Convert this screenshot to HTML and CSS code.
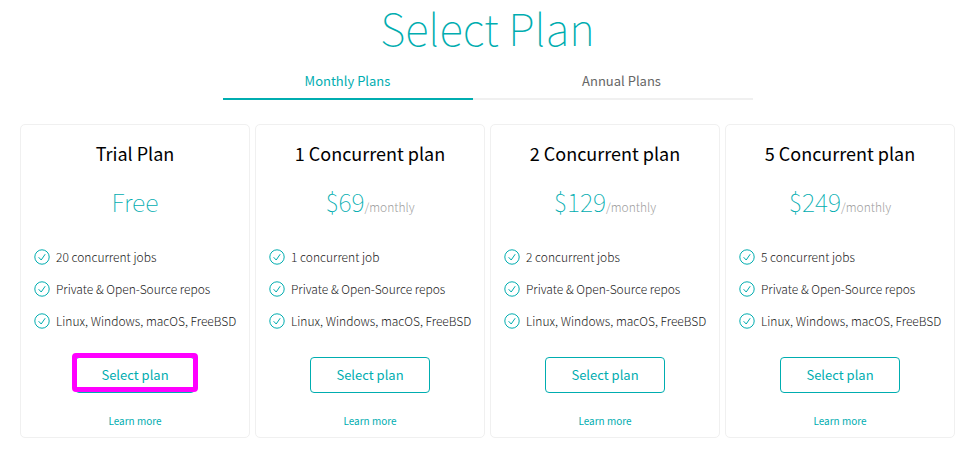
FILE: index.html
```html
<!doctype html>
<html lang="en">
    <head>
        <meta charset="UTF-8" />
        <meta name="viewport" content="width=device-width, initial-scale=1.0" />
        <title>Select Plan</title>
        <link rel="stylesheet" href="styles.css">
    </head>
    <body>
        <!-- Check icon shared by all feature lists -->
        <svg class="sprite" aria-hidden="true">
            <symbol id="check" viewBox="0 0 16 16">
                <circle cx="8" cy="8" r="7.2" />
                <path d="M4.6 8.2l2.6 2.8 4-5.8" />
            </symbol>
        </svg>

        <main class="plans-page">
            <h1>Select Plan</h1>

            <!-- Billing period -->
            <div class="tabs" role="tablist">
                <button class="tab active" role="tab" aria-selected="true">Monthly Plans</button>
                <button class="tab" role="tab" aria-selected="false">Annual Plans</button>
            </div>

            <!-- Plans -->
            <div class="plans">
                <section class="plan">
                    <h2>Trial Plan</h2>
                    <p class="price">Free</p>
                    <ul class="features">
                        <li><svg class="icon"><use href="#check" /></svg>20 concurrent jobs</li>
                        <li><svg class="icon"><use href="#check" /></svg>Private &amp; Open-Source repos</li>
                        <li><svg class="icon"><use href="#check" /></svg>Linux, Windows, macOS, FreeBSD</li>
                    </ul>
                    <button class="select highlight">Select plan</button>
                    <a class="learn-more" href="#">Learn more</a>
                </section>

                <section class="plan">
                    <h2>1 Concurrent plan</h2>
                    <p class="price">$69<span class="period">/monthly</span></p>
                    <ul class="features">
                        <li><svg class="icon"><use href="#check" /></svg>1 concurrent job</li>
                        <li><svg class="icon"><use href="#check" /></svg>Private &amp; Open-Source repos</li>
                        <li><svg class="icon"><use href="#check" /></svg>Linux, Windows, macOS, FreeBSD</li>
                    </ul>
                    <button class="select">Select plan</button>
                    <a class="learn-more" href="#">Learn more</a>
                </section>

                <section class="plan">
                    <h2>2 Concurrent plan</h2>
                    <p class="price">$129<span class="period">/monthly</span></p>
                    <ul class="features">
                        <li><svg class="icon"><use href="#check" /></svg>2 concurrent jobs</li>
                        <li><svg class="icon"><use href="#check" /></svg>Private &amp; Open-Source repos</li>
                        <li><svg class="icon"><use href="#check" /></svg>Linux, Windows, macOS, FreeBSD</li>
                    </ul>
                    <button class="select">Select plan</button>
                    <a class="learn-more" href="#">Learn more</a>
                </section>

                <section class="plan">
                    <h2>5 Concurrent plan</h2>
                    <p class="price">$249<span class="period">/monthly</span></p>
                    <ul class="features">
                        <li><svg class="icon"><use href="#check" /></svg>5 concurrent jobs</li>
                        <li><svg class="icon"><use href="#check" /></svg>Private &amp; Open-Source repos</li>
                        <li><svg class="icon"><use href="#check" /></svg>Linux, Windows, macOS, FreeBSD</li>
                    </ul>
                    <button class="select">Select plan</button>
                    <a class="learn-more" href="#">Learn more</a>
                </section>
            </div>
        </main>
    </body>
</html>
```

FILE: styles.css
```css
* {
    box-sizing: border-box;
}
body {
    margin: 0;
    background: #fff;
    color: #222;
    font-family: "Noto Sans CJK SC", "Noto Sans", sans-serif;
    font-size: 12px;
}
button {
    font-family: inherit;
    background: none;
    cursor: pointer;
}
.sprite {
    display: none;
}
.plans-page {
    padding: 0 22px 18px 20px;
}
h1 {
    margin: 0;
    color: #00adb0;
    font-size: 44px;
    font-weight: 100;
    line-height: 54px;
    text-align: center;
}

/* Tabs */
.tabs {
    display: flex;
    max-width: 530px;
    margin: 8px auto 24px;
    border-bottom: 2px solid #f0f0f0;
}
.tab {
    flex: 1;
    height: 38px;
    margin-bottom: -2px;
    padding: 0 0 2px;
    border: 0;
    color: #666;
    font-size: 13px;
}
.tab.active {
    flex: 0 0 250px;
    margin-right: 18px;
    padding: 0;
    border-bottom: 2px solid #00adb0;
    color: #00adb0;
}

/* Plan cards */
.plans {
    display: grid;
    grid-template-columns: repeat(4, minmax(0, 1fr));
    gap: 5px;
}
.plan {
    display: flex;
    flex-direction: column;
    align-items: center;
    padding: 14px 12px 6px;
    border: 1px solid #f0f0f0;
    border-radius: 5px;
}
h2 {
    margin: 0;
    color: #000;
    font-size: 18px;
    font-weight: 400;
    line-height: 28px;
}
.price {
    margin: 14px 0 19px;
    color: #00adb0;
    font-size: 25px;
    font-weight: 100;
    line-height: 40px;
}
.period {
    color: #a0a0a0;
    font-size: 12px;
    font-weight: 300;
    line-height: 20px;
}
.features {
    align-self: stretch;
    margin: 0;
    padding: 0;
    list-style: none;
}
.features li {
    display: flex;
    align-items: center;
    gap: 6px;
    height: 32px;
    padding-left: 1px;
    font-weight: 300;
    white-space: nowrap;
}
.icon {
    flex: none;
    width: 16px;
    height: 16px;
    margin-top: 2px;
    fill: none;
    stroke: #00adb0;
    stroke-width: 1;
}
.select {
    position: relative;
    width: 120px;
    height: 36px;
    margin: 21px 0 18px;
    padding: 0 0 2px;
    border: 1px solid #00adb0;
    border-radius: 4px;
    color: #00adb0;
    font-size: 13px;
}
.highlight::after {
    content: "";
    position: absolute;
    inset: -5px -4px 0 -4px;
    border: 5px solid #f0f;
    border-radius: 4px;
}
.learn-more {
    color: #00adb0;
    font-size: 10px;
    line-height: 20px;
    text-decoration: none;
}
```
